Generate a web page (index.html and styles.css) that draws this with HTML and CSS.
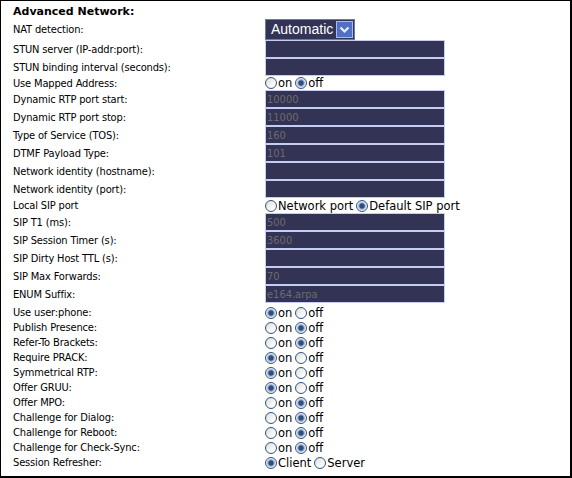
FILE: index.html
```html
<!DOCTYPE html>
<html>
<head>
<meta charset="utf-8">
<link rel="stylesheet" href="styles.css">
</head>
<body>
<div class="panel">
  <div class="row head"><span class="label bold">Advanced Network:</span></div>
  <div class="row sel-row"><span class="label">NAT detection:</span>
    <div class="select"><span class="sel-text">Automatic</span><span class="sel-btn"><svg width="15" height="15" viewBox="0 0 15 15"><path d="M3.5 5.5 L7.5 9.5 L11.5 5.5" fill="none" stroke="#e6eeff" stroke-width="2.2"/></svg></span></div>
  </div>
  <div class="row in-row"><span class="label">STUN server (IP-addr:port):</span><input class="field" type="text" value=""></div>
  <div class="row in-row"><span class="label">STUN binding interval (seconds):</span><input class="field" type="text" value=""></div>
  <div class="row rad-row first-rad"><span class="label">Use Mapped Address:</span><span class="opts"><input type="radio" name="map"><span>on</span><input type="radio" name="map" checked><span>off</span></span></div>
  <div class="row in-row"><span class="label">Dynamic RTP port start:</span><input class="field" type="text" value="10000"></div>
  <div class="row in-row"><span class="label">Dynamic RTP port stop:</span><input class="field" type="text" value="11000"></div>
  <div class="row in-row"><span class="label">Type of Service (TOS):</span><input class="field" type="text" value="160"></div>
  <div class="row in-row"><span class="label">DTMF Payload Type:</span><input class="field" type="text" value="101"></div>
  <div class="row in-row"><span class="label">Network identity (hostname):</span><input class="field" type="text" value=""></div>
  <div class="row in-row"><span class="label">Network identity (port):</span><input class="field" type="text" value=""></div>
  <div class="row rad-row sip-rad"><span class="label">Local SIP port</span><span class="opts"><input type="radio" name="sip"><span>Network port</span><input type="radio" name="sip" checked><span>Default SIP port</span></span></div>
  <div class="row in-row"><span class="label">SIP T1 (ms):</span><input class="field" type="text" value="500"></div>
  <div class="row in-row"><span class="label">SIP Session Timer (s):</span><input class="field" type="text" value="3600"></div>
  <div class="row in-row"><span class="label">SIP Dirty Host TTL (s):</span><input class="field" type="text" value=""></div>
  <div class="row in-row"><span class="label">SIP Max Forwards:</span><input class="field" type="text" value="70"></div>
  <div class="row in-row"><span class="label">ENUM Suffix:</span><input class="field" type="text" value="e164.arpa"></div>
  <div class="list">
    <div class="row rad-row"><span class="label">Use user:phone:</span><span class="opts"><input type="radio" name="r1" checked><span>on</span><input type="radio" name="r1"><span>off</span></span></div>
    <div class="row rad-row"><span class="label">Publish Presence:</span><span class="opts"><input type="radio" name="r2"><span>on</span><input type="radio" name="r2" checked><span>off</span></span></div>
    <div class="row rad-row"><span class="label">Refer-To Brackets:</span><span class="opts"><input type="radio" name="r3"><span>on</span><input type="radio" name="r3" checked><span>off</span></span></div>
    <div class="row rad-row"><span class="label">Require PRACK:</span><span class="opts"><input type="radio" name="r4" checked><span>on</span><input type="radio" name="r4"><span>off</span></span></div>
    <div class="row rad-row"><span class="label">Symmetrical RTP:</span><span class="opts"><input type="radio" name="r5" checked><span>on</span><input type="radio" name="r5"><span>off</span></span></div>
    <div class="row rad-row"><span class="label">Offer GRUU:</span><span class="opts"><input type="radio" name="r6" checked><span>on</span><input type="radio" name="r6"><span>off</span></span></div>
    <div class="row rad-row"><span class="label">Offer MPO:</span><span class="opts"><input type="radio" name="r7"><span>on</span><input type="radio" name="r7" checked><span>off</span></span></div>
    <div class="row rad-row"><span class="label">Challenge for Dialog:</span><span class="opts"><input type="radio" name="r8"><span>on</span><input type="radio" name="r8" checked><span>off</span></span></div>
    <div class="row rad-row"><span class="label">Challenge for Reboot:</span><span class="opts"><input type="radio" name="r9"><span>on</span><input type="radio" name="r9" checked><span>off</span></span></div>
    <div class="row rad-row"><span class="label">Challenge for Check-Sync:</span><span class="opts"><input type="radio" name="r10"><span>on</span><input type="radio" name="r10" checked><span>off</span></span></div>
    <div class="row rad-row"><span class="label">Session Refresher:</span><span class="opts"><input type="radio" name="r11" checked><span>Client</span><input type="radio" name="r11"><span>Server</span></span></div>
  </div>
</div>
</body>
</html>
```
FILE: styles.css
```css
html, body {
  margin: 0;
  padding: 0;
  background: #ffffff;
}
body {
  font-family: "DejaVu Sans Condensed", "DejaVu Sans", Verdana, sans-serif;
  font-size: 11px;
  color: #000;
}
.panel {
  box-sizing: border-box;
  width: 572px;
  height: 478px;
  border-top: 1px solid #000;
  border-left: 1px solid #000;
  border-right: 2px solid #000;
  border-bottom: 2px solid #000;
  padding: 4px 0 0 12px;
}
.row {
  display: grid;
  grid-template-columns: 252px auto;
  align-items: center;
  justify-content: start;
}
.label {
  white-space: nowrap;
  letter-spacing: -0.15px;
}
.bold {
  font-family: "DejaVu Sans", Verdana, sans-serif;
  font-weight: bold;
  letter-spacing: 0;
}
.head {
  height: 13px;
}
.sel-row {
  height: 22px;
}
.in-row {
  height: 18px;
}
.rad-row {
  height: 15px;
}
.first-rad {
  height: 14px;
}
.list {
  padding-top: 2px;
}
.select {
  box-sizing: border-box;
  width: 90px;
  height: 21px;
  background: #333355;
  border: 1px solid #6a7cac;
  display: flex;
  align-items: center;
  justify-content: space-between;
  padding: 0 1px 0 5px;
}
.sel-text {
  font-family: "Liberation Sans", Arial, sans-serif;
  font-size: 14px;
  color: #ffffff;
}
.sel-btn {
  box-sizing: border-box;
  width: 17px;
  height: 17px;
  background: #4f70c6;
  border: 1px solid #a7bbe6;
  display: flex;
  align-items: center;
  justify-content: center;
}
.sel-btn svg {
  display: block;
}
.field {
  box-sizing: border-box;
  width: 180px;
  height: 18px;
  margin: 0;
  padding: 0 1px;
  border: 1px solid #c6cdf2;
  background: #333355;
  color: #6c6c6c;
  font-family: "DejaVu Sans Condensed", "DejaVu Sans", Verdana, sans-serif;
  font-size: 11px;
  outline: none;
}
.opts {
  display: flex;
  align-items: center;
  white-space: nowrap;
  font-family: "DejaVu Sans", Verdana, sans-serif;
  font-size: 11.5px;
  line-height: 14px;
}
.opts span {
  margin-left: 1px;
}
.opts input[type="radio"] {
  -webkit-appearance: none;
  appearance: none;
  box-sizing: border-box;
  width: 12px;
  height: 12px;
  margin: 0;
  border: 1px solid #2f5585;
  border-radius: 50%;
  background: linear-gradient(135deg, #dcdcd6 0%, #f6f6f4 60%, #ffffff 100%);
}
.opts input[type="radio"] + span + input[type="radio"] {
  margin-left: 3px;
}
.opts input[type="radio"]:checked {
  background: radial-gradient(circle, #2e4e80 0, #2e4e80 2.2px, #8fa6c8 3px, #e4e8ee 4.5px, #ffffff 6px);
}
```
